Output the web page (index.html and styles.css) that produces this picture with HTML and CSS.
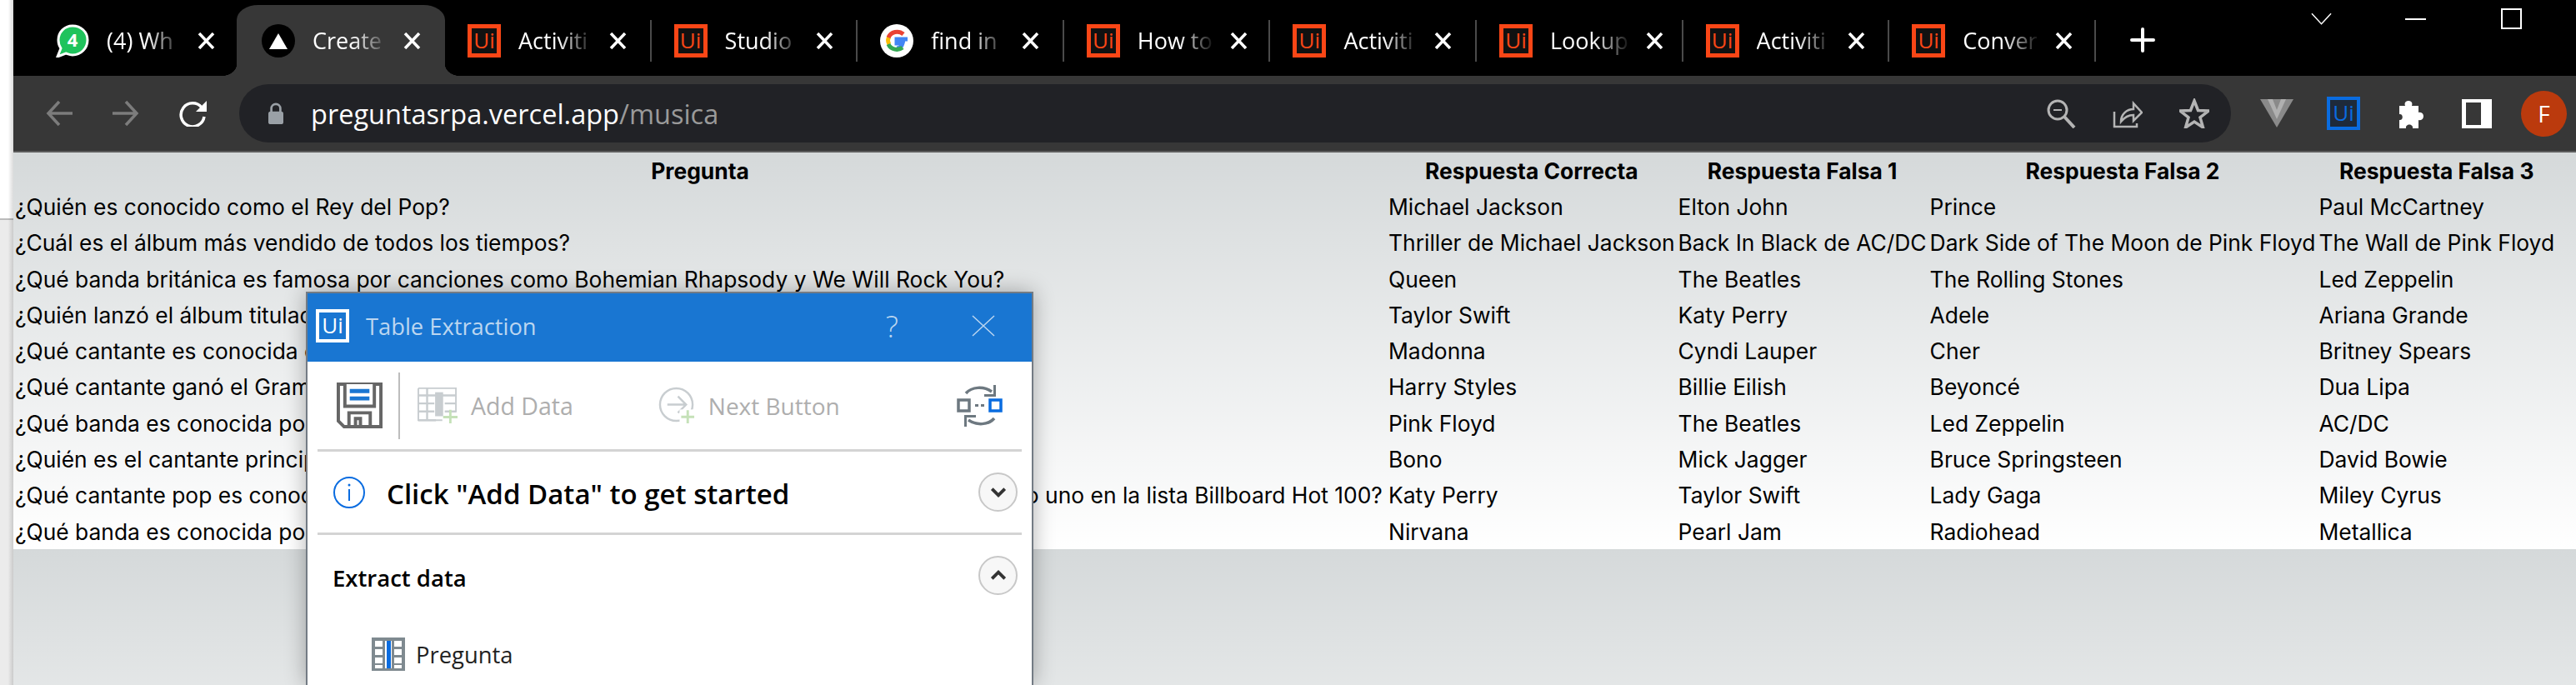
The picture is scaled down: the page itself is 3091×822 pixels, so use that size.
FILE: index.html
```html
<!DOCTYPE html>
<html lang="en">
<head>
  <meta charset="UTF-8" />
  <title>Create</title>
  <link rel="stylesheet" href="styles.css">
</head>
<body>
  <svg class="defs" width="0" height="0">
    <symbol id="close-x" viewBox="0 0 21 20"><path d="M2 1l17 18M19 1L2 19" fill="none" stroke="#fff" stroke-width="3.500"/></symbol>
  </svg>
  <div class="strip"></div>
  <div class="browser">
    <div class="tabbar">
      <div class="tab first"><svg class="fav" viewBox="0 0 40 40"><path d="M20 2C10 2 3 10 3 19c0 4 1 7 3 10L2 39l10-4c3 1 5 2 8 2 10 0 18-8 18-18S30 2 20 2z" fill="#1fc35c" stroke="#fff" stroke-width="3"/><text x="20" y="27" class="fav-num">4</text></svg><span class="tab-title">(4) Wh</span><svg class="tab-x"><use href="#close-x"/></svg></div>
      <div class="tab active"><svg class="fav" viewBox="0 0 40 40"><circle cx="20" cy="20" r="20" fill="#000"/><path d="M20 11l11 19H9z" fill="#fff"/></svg><span class="tab-title">Create</span><svg class="tab-x"><use href="#close-x"/></svg></div>
      <div class="tab sep-after"><span class="ui-fav">Ui</span><span class="tab-title">Activiti</span><svg class="tab-x"><use href="#close-x"/></svg></div>
      <div class="tab sep-after"><span class="ui-fav">Ui</span><span class="tab-title">Studio</span><svg class="tab-x"><use href="#close-x"/></svg></div>
      <div class="tab sep-after"><svg class="fav" viewBox="0 0 40 40"><circle cx="20" cy="20" r="20" fill="#fff"/><path d="M33 18H20v5h7c-1 4-4 6-7 6" fill="none" stroke="#4285f4" stroke-width="5"/><path d="M11 24c-2-3-2-6 0-9" fill="none" stroke="#fbbc05" stroke-width="5"/><path d="M10 16c3-7 12-9 18-4" fill="none" stroke="#ea4335" stroke-width="5"/><path d="M10 24c3 7 12 8 17 4" fill="none" stroke="#34a853" stroke-width="5"/></svg><span class="tab-title">find in</span><svg class="tab-x"><use href="#close-x"/></svg></div>
      <div class="tab sep-after"><span class="ui-fav">Ui</span><span class="tab-title">How to</span><svg class="tab-x"><use href="#close-x"/></svg></div>
      <div class="tab sep-after"><span class="ui-fav">Ui</span><span class="tab-title">Activiti</span><svg class="tab-x"><use href="#close-x"/></svg></div>
      <div class="tab sep-after"><span class="ui-fav">Ui</span><span class="tab-title">Lookup</span><svg class="tab-x"><use href="#close-x"/></svg></div>
      <div class="tab sep-after"><span class="ui-fav">Ui</span><span class="tab-title">Activiti</span><svg class="tab-x"><use href="#close-x"/></svg></div>
      <div class="tab sep-after"><span class="ui-fav">Ui</span><span class="tab-title">Conver</span><svg class="tab-x"><use href="#close-x"/></svg></div>
      <svg class="new-tab" viewBox="0 0 30 30"><path d="M15 2v26M2 15h26" stroke="#fff" stroke-width="4" stroke-linecap="round"/></svg>
      <div class="win-btns">
        <svg class="win-chev" viewBox="0 0 26 16"><path d="M1 1l12 13L25 1" fill="none" stroke="#fff" stroke-width="1.500"/></svg>
        <div class="win-min"></div>
        <div class="win-max"></div>
      </div>
    </div>
    <div class="toolbar">
      <svg class="nav" viewBox="0 0 32 32"><path d="M32 16H3M16 2L3 16l13 14" fill="none" stroke="#7c7c7c" stroke-width="3.500"/></svg>
      <svg class="nav" viewBox="0 0 32 32"><path d="M0 16h29M16 2l13 14-13 14" fill="none" stroke="#7c7c7c" stroke-width="3.500"/></svg>
      <svg class="nav reload" viewBox="0 0 34 32"><path d="M27 9a14 14 0 1 0 3 11" fill="none" stroke="#fff" stroke-width="3.500"/><path d="M33 1v13H20z" fill="#fff"/></svg>
      <div class="omnibox">
        <svg class="lock" viewBox="0 0 22 30"><path d="M5 13V8a6 6 0 0 1 12 0v5" fill="none" stroke="#9aa0a6" stroke-width="3"/><rect x="1" y="12" width="20" height="17" rx="3" fill="#9aa0a6"/></svg>
        <span class="url">preguntasrpa.vercel.app<span class="url-path">/musica</span></span>
        <div class="omni-icons">
          <svg class="omni-icon" viewBox="0 0 36 36"><circle cx="14" cy="14" r="11" fill="none" stroke="#b4b4b4" stroke-width="3"/><path d="M9 14h10" stroke="#b4b4b4" stroke-width="2"/><path d="M22 22l12 13" stroke="#b4b4b4" stroke-width="4"/></svg>
          <svg class="omni-icon" viewBox="0 0 36 36"><path d="M2 16v18h27v-4" fill="none" stroke="#b4b4b4" stroke-width="2.500"/><path d="M10 28c0-9 7-15 15-15V6l10 11-10 10v-7c-6 0-11 3-15 8z" fill="none" stroke="#b4b4b4" stroke-width="2.500"/></svg>
          <svg class="omni-icon" viewBox="0 0 36 36"><path d="M18 3l4.500 11.500 12.500.5-10 8 3.500 12L18 28 7.500 35 11 23 1 15l12.500-.5z" fill="none" stroke="#b4b4b4" stroke-width="3.500"/></svg>
        </div>
      </div>
      <div class="ext-icons">
        <svg class="vercel" viewBox="0 0 40 34"><path d="M0 0h40L20 34z" fill="#8a8a8a"/><path d="M9 0h22L20 24z" fill="#b0b0b0"/><path d="M15 0h10l-5 13z" fill="#8a8a8a"/></svg>
        <span class="ui-ext">Ui</span>
        <svg class="puzzle" viewBox="0 0 36 36"><path d="M4 9h7c-3-8 11-8 8 0h8v8c8-2 8 11 0 9v10h-7c1-6-9-6-8 0H4V26c5 1 5-8 0-7z" fill="#fff"/></svg>
        <div class="side-panel"></div>
        <div class="avatar">F</div>
      </div>
    </div>
    <div class="page">
      <table class="qa-table">
        <thead>
          <tr><th>Pregunta</th><th>Respuesta Correcta</th><th>Respuesta Falsa 1</th><th>Respuesta Falsa 2</th><th>Respuesta Falsa 3</th></tr>
        </thead>
        <tbody>
          <tr><td>¿Quién es conocido como el Rey del Pop?</td><td>Michael Jackson</td><td>Elton John</td><td>Prince</td><td>Paul McCartney</td></tr>
          <tr><td>¿Cuál es el álbum más vendido de todos los tiempos?</td><td>Thriller de Michael Jackson</td><td>Back In Black de AC/DC</td><td>Dark Side of The Moon de Pink Floyd</td><td>The Wall de Pink Floyd</td></tr>
          <tr><td>¿Qué banda británica es famosa por canciones como Bohemian Rhapsody y We Will Rock You?</td><td>Queen</td><td>The Beatles</td><td>The Rolling Stones</td><td>Led Zeppelin</td></tr>
          <tr><td>¿Quién lanzó el álbum titulado 1989?</td><td>Taylor Swift</td><td>Katy Perry</td><td>Adele</td><td>Ariana Grande</td></tr>
          <tr><td>¿Qué cantante es conocida como la Reina del Pop?</td><td>Madonna</td><td>Cyndi Lauper</td><td>Cher</td><td>Britney Spears</td></tr>
          <tr><td>¿Qué cantante ganó el Grammy al Mejor Álbum del Año?</td><td>Harry Styles</td><td>Billie Eilish</td><td>Beyoncé</td><td>Dua Lipa</td></tr>
          <tr><td>¿Qué banda es conocida por el álbum The Wall?</td><td>Pink Floyd</td><td>The Beatles</td><td>Led Zeppelin</td><td>AC/DC</td></tr>
          <tr><td>¿Quién es el cantante principal de la banda U2?</td><td>Bono</td><td>Mick Jagger</td><td>Bruce Springsteen</td><td>David Bowie</td></tr>
          <tr><td>¿Qué cantante pop es conocida por lograr un récord de más canciones consecutivas en el número uno en la lista Billboard Hot 100?</td><td>Katy Perry</td><td>Taylor Swift</td><td>Lady Gaga</td><td>Miley Cyrus</td></tr>
          <tr><td>¿Qué banda es conocida por su canción Smells Like Teen Spirit?</td><td>Nirvana</td><td>Pearl Jam</td><td>Radiohead</td><td>Metallica</td></tr>
        </tbody>
      </table>
    </div>
  </div>

  <div class="dialog">
    <div class="dialog-head">
      <span class="ui-dlg">Ui</span>
      <span class="dialog-title">Table Extraction</span>
      <span class="dialog-help">?</span>
      <svg class="dialog-close" viewBox="0 0 28 26"><path d="M1 1l26 24M27 1L1 25" fill="none" stroke="#bcd6f0" stroke-width="1.500"/></svg>
    </div>
    <div class="dialog-tools">
      <svg class="save" viewBox="0 0 56 56"><path d="M2 2h52v52H9l-7-7z" fill="#fff" stroke="#666" stroke-width="4"/><path d="M10 2v27h36V2" fill="#fff" stroke="#666" stroke-width="4"/><path d="M16 8h24v5H16zM16 17h24v5H16z" fill="#1976d2"/><path d="M15 54V37h26v17M23 54v-10h6v10" fill="none" stroke="#666" stroke-width="4"/></svg>
      <div class="tool-sep"></div>
      <svg class="table-icon" viewBox="0 0 50 46"><path d="M1 1h47v30M1 1v40h30" fill="none" stroke="#c8cdd0" stroke-width="2"/><path d="M1 10h47M1 20h20M1 30h20M34 20h14M34 30h14M1 41h22M12 1v40" stroke="#c8cdd0" stroke-width="2.500"/><rect x="22" y="6" width="10" height="30" fill="#c8cdd0"/><path d="M41 28v17M32 37h18" stroke="#c5e1b8" stroke-width="3"/></svg>
      <span class="tool-label add-label">Add Data</span>
      <svg class="next-icon" viewBox="0 0 46 46"><circle cx="22" cy="22" r="20" fill="none" stroke="#c8cdd0" stroke-width="2.500"/><path d="M11 22h22M24 12l10 10-10 10" fill="none" stroke="#c8cdd0" stroke-width="2.500"/><rect x="26" y="28" width="20" height="18" fill="#fff"/><path d="M36 29v16M28 37h16" stroke="#c5e1b8" stroke-width="3"/></svg>
      <span class="tool-label">Next Button</span>
      <svg class="refresh" viewBox="0 0 56 52"><path d="M11 11C18 3 32 2 42 9" fill="none" stroke="#6d7880" stroke-width="3.500"/><path d="M47 1v14H33v-3h11V1z" fill="#6d7880"/><rect x="2" y="19" width="13" height="13" fill="#fff" stroke="#6d7880" stroke-width="3.500"/><rect x="40" y="19" width="13" height="13" fill="#fff" stroke="#0a6ce0" stroke-width="3.500"/><path d="M22 24h4v3h-4zM29 24h4v3h-4z" fill="#6d7880"/><path d="M45 41c-7 8-21 9-31 2" fill="none" stroke="#6d7880" stroke-width="3.500"/><path d="M9 51V37h14v3H12v11z" fill="#6d7880"/></svg>
    </div>
    <div class="dialog-info">
      <svg class="info-icon" viewBox="0 0 40 40"><circle cx="20" cy="20" r="18" fill="none" stroke="#0a6ce0" stroke-width="2"/><path d="M20 16v14" stroke="#0a6ce0" stroke-width="2"/><circle cx="20" cy="11" r="1.500" fill="#0a6ce0"/></svg>
      <span class="info-text">Click "Add Data" to get started</span>
      <span class="round-btn"><svg viewBox="0 0 20 14"><path d="M3 3l7 7 7-7" fill="none" stroke="#333" stroke-width="3.500"/></svg></span>
    </div>
    <div class="dialog-section">
      <div class="section-head">
        <span class="section-title">Extract data</span>
        <span class="round-btn"><svg viewBox="0 0 20 14"><path d="M3 11l7-7 7 7" fill="none" stroke="#333" stroke-width="3.500"/></svg></span>
      </div>
      <div class="section-item">
        <svg class="col-icon" viewBox="0 0 40 40"><rect width="40" height="40" fill="#7f8a90"/><path d="M4 4h9v7H4zM4 14h9v7H4zM4 24h9v7H4zM4 33h9v4H4zM27 4h9v7h-9zM27 14h9v7h-9zM27 24h9v7h-9zM27 33h9v4h-9z" fill="#fff"/><rect x="16" y="4" width="8" height="33" fill="#fff"/><rect x="18" y="4" width="5" height="33" fill="#0a6ce0"/></svg>
        <span class="item-label">Pregunta</span>
      </div>
    </div>
  </div>
</body>
</html>
```
FILE: styles.css
```css
html, body {
  margin: 0;
  height: 822px;
  overflow: hidden;
}
body {
  display: flex;
  background: #fff;
  font-family: "Open Sans", sans-serif;
}
.defs {
  position: absolute;
}
.strip {
  width: 16px;
  flex: none;
  background:
    linear-gradient(to right, transparent 60%, rgba(0, 0, 0, 0.14)),
    linear-gradient(#fff 262px, #bbb 262px, #bbb 264px, #ebebeb 264px);
}
.browser {
  flex: 1;
  display: flex;
  flex-direction: column;
  min-width: 0;
}

/* tab strip */
.tabbar {
  height: 91px;
  background: #000;
  display: flex;
  align-items: flex-end;
  flex: none;
}
.tab {
  box-sizing: border-box;
  width: 247.600px;
  height: 85px;
  display: flex;
  align-items: center;
  padding: 0 29px 0 27px;
  color: #fff;
  position: relative;
  flex: none;
}
.tab.first {
  width: 268px;
  padding-left: 51px;
}
.tab.active {
  width: 250px;
  padding-left: 30px;
  background: #373737;
  border-radius: 26px 26px 0 0 / 18px 18px 0 0;
}
.tab.active::before, .tab.active::after {
  content: "";
  position: absolute;
  bottom: 0;
  width: 18px;
  height: 14px;
}
.tab.active::before {
  left: -18px;
  background: radial-gradient(ellipse at 0 0, #000 70%, #373737 72%);
}
.tab.active::after {
  right: -18px;
  background: radial-gradient(ellipse at 100% 0, #000 70%, #373737 72%);
}
.sep-after::after {
  content: "";
  position: absolute;
  right: 0;
  top: 18px;
  width: 2px;
  height: 50px;
  background: #4a4a4a;
}
.fav, .ui-fav {
  width: 40px;
  height: 40px;
  flex: none;
}
.fav-num {
  font-size: 22px;
  font-weight: 700;
  fill: #fff;
  text-anchor: middle;
}
.ui-fav {
  box-sizing: border-box;
  border: 5px solid #fa4616;
  background: #111;
  color: #fa4616;
  font-size: 26px;
  line-height: 29px;
  text-align: center;
}
.tab-title {
  flex: 0 0 88px;
  margin: 0 21px;
  font-size: 27px;
  white-space: nowrap;
  -webkit-mask-image: linear-gradient(to right, #000 55%, rgba(0, 0, 0, 0.1) 98%);
  mask-image: linear-gradient(to right, #000 55%, rgba(0, 0, 0, 0.1) 98%);
}
.tab-x {
  width: 21px;
  height: 20px;
  flex: none;
}
.new-tab {
  width: 30px;
  height: 30px;
  margin: 0 0 28px 41px;
  flex: none;
}
.win-btns {
  margin-left: auto;
  align-self: flex-start;
  display: flex;
  align-items: center;
  padding-top: 10px;
  margin-right: 65px;
}
.win-chev {
  width: 25px;
  height: 16px;
  margin-top: 1px;
}
.win-min {
  width: 25px;
  height: 2px;
  background: #fff;
  margin: 0 90px 0 88px;
}
.win-max {
  box-sizing: border-box;
  width: 25px;
  height: 25px;
  border: 2px solid #fff;
}

/* address bar row */
.toolbar {
  height: 90px;
  background: #373737;
  display: flex;
  align-items: center;
  flex: none;
  padding-left: 39px;
}
.nav {
  width: 32px;
  height: 32px;
  margin-right: 48px;
  flex: none;
}
.reload {
  width: 34px;
  margin-right: 38px;
}
.omnibox {
  width: 2390px;
  height: 70px;
  background: #212226;
  border-radius: 35px;
  display: flex;
  align-items: center;
  flex: none;
  padding: 0 26px 0 34px;
  box-sizing: border-box;
}
.lock {
  width: 20px;
  height: 27px;
  flex: none;
}
.url {
  margin-left: 32px;
  font-size: 32.500px;
  color: #fff;
  white-space: nowrap;
}
.url-path {
  color: #9a9a9a;
}
.omni-icons {
  margin-left: auto;
  display: flex;
  gap: 44px;
}
.omni-icon {
  width: 36px;
  height: 36px;
}
.ext-icons {
  display: flex;
  align-items: center;
  margin-left: 35px;
  flex: none;
}
.vercel {
  width: 40px;
  height: 34px;
}
.ui-ext {
  box-sizing: border-box;
  width: 40px;
  height: 40px;
  border: 4px solid #0a6ce0;
  background: #1e2a3a;
  color: #0a6ce0;
  font-size: 26px;
  line-height: 30px;
  text-align: center;
  margin-left: 40px;
}
.puzzle {
  width: 36px;
  height: 36px;
  margin-left: 43px;
}
.side-panel {
  box-sizing: border-box;
  width: 36px;
  height: 35px;
  border: solid #fff;
  border-width: 4px 13px 4px 5px;
  background: #373737;
  margin-left: 43px;
}
.avatar {
  width: 55px;
  height: 55px;
  border-radius: 50%;
  background: #bb3a0d;
  color: #fff;
  font-size: 28px;
  text-align: center;
  line-height: 55px;
  margin-left: 35px;
}

/* page content */
.page {
  flex: 1;
  border-top: 2px solid #5c5c5c;
  background: linear-gradient(to bottom, #d5d9da, #ffffff) 0 0 / 100% 476px repeat-y;
}
.qa-table {
  border-collapse: collapse;
  font-family: Inter, sans-serif;
  font-size: 26.400px;
  color: #000;
  white-space: nowrap;
}
.qa-table th, .qa-table td {
  height: 43.300px;
  padding: 0 2px;
  text-align: left;
}
.qa-table th {
  text-align: center;
}
.qa-table th:first-child {
  width: 1644px;
}

/* floating extraction wizard */
.dialog {
  position: absolute;
  left: 367px;
  top: 350px;
  width: 873px;
  height: 472px;
  box-sizing: border-box;
  background: #fff;
  border: solid #737b84;
  border-width: 2px 2px 0 2px;
  box-shadow: 0 0 24px rgba(0, 0, 0, 0.3);
}
.dialog-head {
  height: 82px;
  background: #1976d2;
  display: flex;
  align-items: center;
  padding: 0 44px 0 10px;
  color: #bcd6f0;
}
.ui-dlg {
  box-sizing: border-box;
  width: 40px;
  height: 40px;
  border: 4px solid #fff;
  background: #1976d2;
  color: #fff;
  font-size: 26px;
  line-height: 30px;
  text-align: center;
  margin-bottom: 4px;
}
.dialog-title {
  margin-left: 20px;
  font-size: 27.300px;
  flex: 1;
  margin-bottom: 4px;
}
.dialog-help {
  font-size: 36px;
  font-weight: 300;
  margin: 0 88px 4px 0;
}
.dialog-close {
  width: 28px;
  height: 26px;
  margin-bottom: 4px;
}
.dialog-tools {
  box-sizing: border-box;
  height: 108px;
  display: flex;
  align-items: center;
  margin: 0 12px;
  border-bottom: 3px solid #d4d4d4;
  padding-left: 23px;
}
.save {
  width: 55px;
  height: 55px;
  flex: none;
}
.tool-sep {
  width: 2px;
  height: 80px;
  background: #bdbdbd;
  margin: 0 21px 0 19px;
}
.table-icon {
  width: 48px;
  height: 46px;
  flex: none;
}
.tool-label {
  font-size: 28px;
  color: #aeaeae;
  margin-left: 15px;
}
.add-label {
  margin-left: 16px;
  font-size: 28.500px;
}
.next-icon {
  width: 45px;
  height: 45px;
  flex: none;
  margin-left: 102px;
}
.refresh {
  width: 56px;
  height: 52px;
  margin-left: auto;
  margin-right: 22px;
}
.dialog-info {
  box-sizing: border-box;
  height: 100px;
  margin: 0 12px;
  border-bottom: 3px solid #d4d4d4;
  display: flex;
  align-items: center;
  padding-left: 18px;
}
.info-icon {
  width: 40px;
  height: 40px;
  flex: none;
}
.info-text {
  margin: 4px 0 0 25px;
  font-size: 33px;
  font-weight: 600;
  color: #000;
}
.round-btn {
  box-sizing: border-box;
  width: 47px;
  height: 47px;
  border: 2px solid #c8c8c8;
  border-radius: 50%;
  background: #f7f7f7;
  margin-left: auto;
  margin-right: 5px;
  display: flex;
  align-items: center;
  justify-content: center;
  flex: none;
}
.round-btn svg {
  width: 22px;
  height: 16px;
}
.dialog-section {
  margin: 0 12px;
  padding-left: 18px;
}
.section-head {
  height: 96px;
  display: flex;
  align-items: center;
}
.section-title {
  margin-top: 6px;
  font-size: 27.500px;
  font-weight: 600;
  color: #000;
}
.section-item {
  display: flex;
  align-items: center;
  margin: 27px 0 0 47px;
}
.col-icon {
  width: 40px;
  height: 40px;
  flex: none;
}
.item-label {
  margin-left: 13px;
  font-size: 27.400px;
  color: #222;
}
```
